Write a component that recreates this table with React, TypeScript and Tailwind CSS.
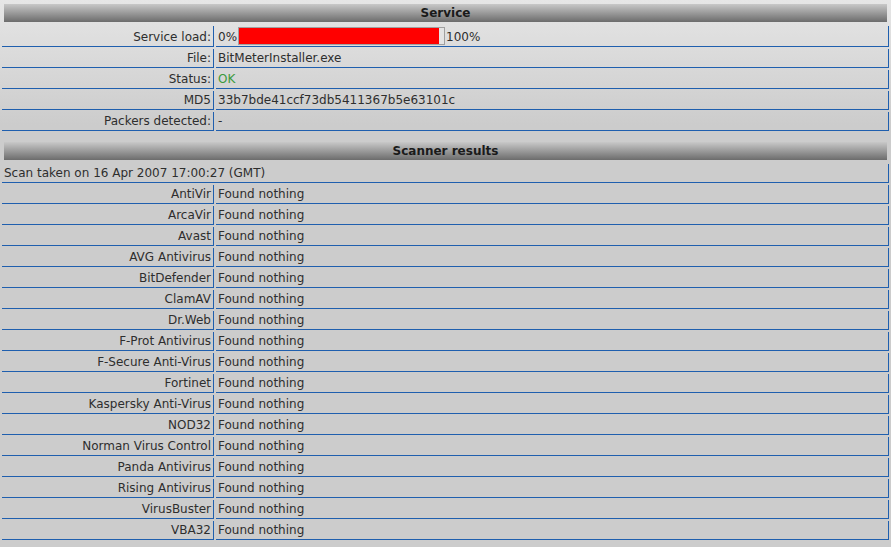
import React from "react";

const engines = [
  "AntiVir",
  "ArcaVir",
  "Avast",
  "AVG Antivirus",
  "BitDefender",
  "ClamAV",
  "Dr.Web",
  "F-Prot Antivirus",
  "F-Secure Anti-Virus",
  "Fortinet",
  "Kaspersky Anti-Virus",
  "NOD32",
  "Norman Virus Control",
  "Panda Antivirus",
  "Rising Antivirus",
  "VirusBuster",
  "VBA32",
];

const td =
  "border-r border-b border-[#1f5fae] px-[2px] pt-[1px] pb-0 h-[19px] leading-[17px] align-middle whitespace-nowrap";

function Header({ title }: { title: string }) {
  return (
    <tr>
      <th colSpan={2} className="p-[2px]">
        <div className="h-[18px] pt-[1px] leading-[17px] text-center font-bold text-[#1a1a1a] bg-[linear-gradient(to_bottom,#c8c8c8,#6c6c6c)]">
          {title}
        </div>
      </th>
    </tr>
  );
}

function Row({ label, children }: { label: string; children: React.ReactNode }) {
  return (
    <tr>
      <td className={`${td} w-[212px] text-right`}>{label}</td>
      <td className={`${td} text-left`}>{children}</td>
    </tr>
  );
}

export default function App() {
  return (
    <div
      className="w-[891px] h-[547px] overflow-hidden text-[12px] text-[#2e2e2e] bg-[#cccccc] bg-[linear-gradient(to_bottom,#e6e6e6,#cccccc_125px)]"
      style={{ fontFamily: '"DejaVu Sans", Verdana, sans-serif' }}
    >
      <table className="w-full table-fixed border-separate border-spacing-[2px]">
        <colgroup>
          <col className="w-[212px]" />
          <col />
        </colgroup>
        <tbody>
          <Header title="Service" />
          <tr>
            <td className="border-r border-b border-[#1f5fae] px-[2px] py-0 h-[21px] align-middle whitespace-nowrap text-right pt-[1px]">
              Service load:
            </td>
            <td className="border-r border-b border-[#1f5fae] px-[2px] py-0 h-[21px] align-middle whitespace-nowrap text-left">
              <div className="flex items-center h-[20px]">
                <span className="pt-[1px]">0%</span>
                <span className="ml-[1px] flex h-[18px] w-[207px] border border-[#a0a0a0] bg-[#e4e4e4]">
                  <span className="h-full w-[200px] bg-[#ff0000]" />
                </span>
                <span className="ml-[1px] pt-[1px]">100%</span>
              </div>
            </td>
          </tr>
          <Row label="File:">BitMeterInstaller.exe</Row>
          <Row label="Status:">
            <span className="text-[#3c9a3c]">OK</span>
          </Row>
          <Row label="MD5">33b7bde41ccf73db5411367b5e63101c</Row>
          <Row label="Packers detected:">-</Row>
        </tbody>
      </table>
      <table className="mt-[5px] w-full table-fixed border-separate border-spacing-[2px]">
        <colgroup>
          <col className="w-[212px]" />
          <col />
        </colgroup>
        <tbody>
          <Header title="Scanner results" />
          <tr>
            <td colSpan={2} className={`${td} text-left`}>
              Scan taken on 16 Apr 2007 17:00:27 (GMT)
            </td>
          </tr>
          {engines.map((e) => (
            <Row key={e} label={e}>
              Found nothing
            </Row>
          ))}
        </tbody>
      </table>
    </div>
  );
}
